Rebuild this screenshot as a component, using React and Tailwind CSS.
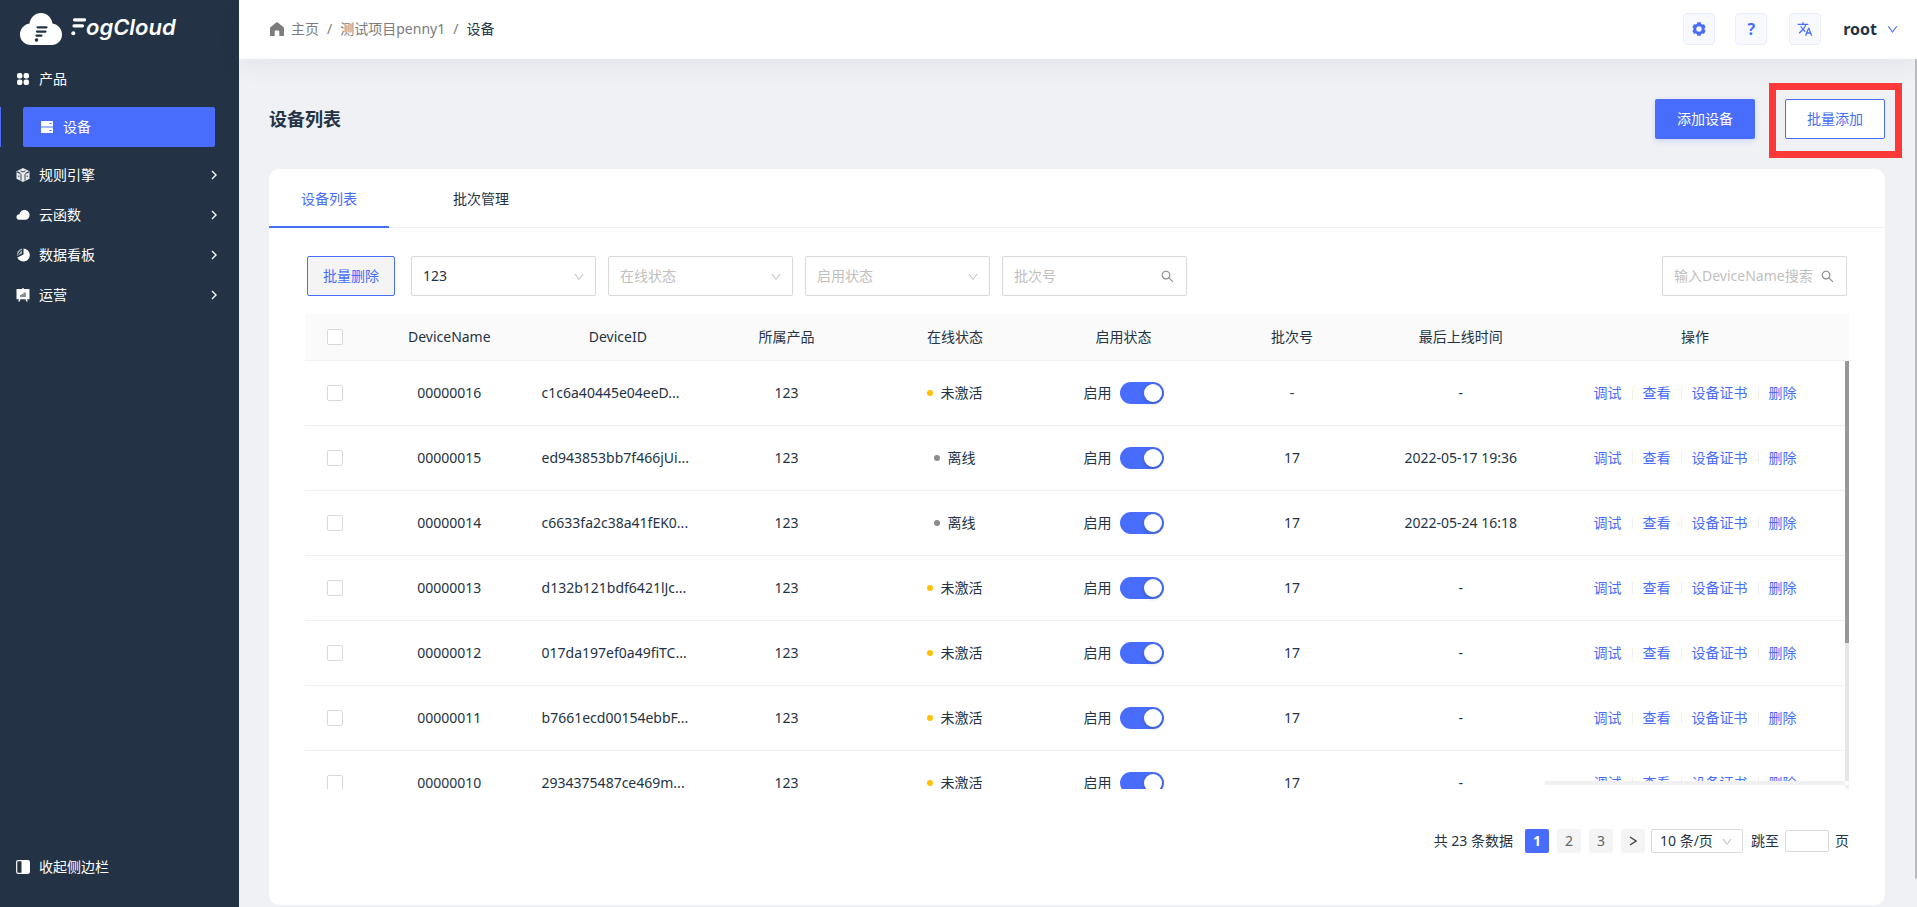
import React, { useState } from 'react';
import { AiOutlineDown, AiOutlineSearch } from 'react-icons/ai';
import { MdTranslate } from 'react-icons/md';

const devices = [
  { name: '00000016', id: 'c1c6a40445e04eeD...', product: '123', online: false, batch: '-', time: '-' },
  { name: '00000015', id: 'ed943853bb7f466jUi...', product: '123', online: true, batch: '17', time: '2022-05-17 19:36' },
  { name: '00000014', id: 'c6633fa2c38a41fEK0...', product: '123', online: true, batch: '17', time: '2022-05-24 16:18' },
  { name: '00000013', id: 'd132b121bdf6421lJc...', product: '123', online: false, batch: '17', time: '-' },
  { name: '00000012', id: '017da197ef0a49fiTC...', product: '123', online: false, batch: '17', time: '-' },
  { name: '00000011', id: 'b7661ecd00154ebbF...', product: '123', online: false, batch: '17', time: '-' },
  { name: '00000010', id: '2934375487ce469m...', product: '123', online: false, batch: '17', time: '-' },
];

const columns = ['DeviceName', 'DeviceID', '所属产品', '在线状态', '启用状态', '批次号', '最后上线时间'];
const actions = ['调试', '查看', '设备证书', '删除'];

const Logo = () => (
  <a href="#home" aria-label="FogCloud" className="flex h-[59px] items-center pl-5 text-white">
    <svg className="mb-0.5" width="42" height="32" viewBox="0 0 42 32">
      <path
        d="M11 32C5 32 0 27.500 0 21.500C0 16 4 11.500 9.500 10.500C10.500 4.500 15 0 21 0C27 0 31.500 4.500 32.500 10.500C38 11.500 42 16 42 21.500C42 27.500 37.500 32 31.500 32Z"
        fill="#fff"
      />
      <path d="M17.500 14.300H26.500M17 18.600H25.500M16.500 22.600H21.500" stroke="#233345" strokeWidth="2.200" strokeLinecap="round" />
      <circle cx="16.500" cy="27" r="1.800" fill="#233345" />
    </svg>
    <svg className="mb-1.5 ml-[9px]" width="15" height="18" viewBox="0 0 15 18">
      <path d="M3.500 1.800H13.500M3 7.800H11.500" stroke="#fff" strokeWidth="3.200" strokeLinecap="round" />
      <circle cx="2.300" cy="15.200" r="2" fill="#fff" />
    </svg>
    <span className="mb-1.5 font-['Inter',sans-serif] text-[22px] leading-8 font-semibold italic">ogCloud</span>
  </a>
);

const GridIcon = () => (
  <svg width="14" height="14" viewBox="0 0 14 14" fill="currentColor">
    <rect x="1" y="1" width="5.400" height="5.400" rx="2" />
    <rect x="7.600" y="1" width="5.400" height="5.400" rx="2" />
    <rect x="1" y="7.600" width="5.400" height="5.400" rx="2" />
    <rect x="7.600" y="7.600" width="5.400" height="5.400" rx="2" />
  </svg>
);

const ServerIcon = () => (
  <svg width="14" height="14" viewBox="0 0 14 14">
    <rect x="1" y="1" width="12" height="5" rx="0.600" fill="#fff" />
    <rect x="1" y="6" width="12" height="2" fill="#fff" opacity="0.500" />
    <rect x="1" y="8" width="12" height="5" rx="0.600" fill="#fff" />
    <path d="M9.500 3.500H11.500M9.500 10.500H11.500" stroke="#486cfb" />
  </svg>
);

const CubeIcon = () => (
  <svg width="14" height="14" viewBox="0 0 14 14">
    <path d="M7 0L13.500 3.300V10.700L7 14L0.500 10.700V3.300Z" fill="#fff" opacity="0.900" />
    <path d="M1 3.800L4.500 5.500M13 3.800L9.500 5.500" fill="none" stroke="#233345" strokeWidth="1.200" />
    <path d="M4.500 2.800L7 4L9.500 2.800M5 6V12.500M9 6V12.500M2.800 7.500V9M11.200 7.500V9" fill="none" stroke="#233345" strokeWidth="0.900" />
  </svg>
);

const CloudIcon = () => (
  <svg width="16" height="14" viewBox="0 0 16 14">
    <path
      d="M4 12.500C1.800 12.500 0.500 11 0.500 9.200C0.500 7.400 2 6 4 6C4.500 3.200 6.600 1.300 9.500 1.300C13 1.300 15.500 3.900 15.500 7C15.500 10.200 13.200 12.500 10.500 12.500Z"
      fill="#fff"
    />
  </svg>
);

const PieIcon = () => (
  <svg width="14" height="14" viewBox="0 0 14 14">
    <path d="M7.500 0.500A6.500 6.500 0 1 1 1.300 9.500L7.500 6.500Z" fill="#fff" />
    <path d="M6 0.500V5.500L1 8A6.300 6.300 0 0 1 6 0.500Z" fill="#fff" opacity="0.600" />
    <path d="M1.500 7L5.500 2" stroke="#233345" />
  </svg>
);

const BoardIcon = () => (
  <svg width="14" height="14" viewBox="0 0 14 14">
    <path d="M7 0V2M4 11L2.800 13.500M10 11L11.200 13.500" stroke="#fff" strokeWidth="1.400" />
    <rect x="0.500" y="1" width="13" height="10.300" rx="0.600" fill="#fff" />
    <path d="M4 9V7H5.500V6H7.500V4.500H10V9Z" fill="#233345" opacity="0.550" />
  </svg>
);

const CollapseIcon = () => (
  <svg width="14" height="14" viewBox="0 0 14 14">
    <rect x="0.700" y="0.700" width="12.600" height="12.600" rx="1.200" fill="none" stroke="#fff" strokeWidth="1.200" />
    <rect x="5.500" y="1" width="8" height="12" fill="#fff" />
  </svg>
);

const HomeIcon = () => (
  <svg width="16" height="14" viewBox="0 0 16 14">
    <path
      d="M7.200 0.500C7.700 0.100 8.300 0.100 8.800 0.500L14.600 5.200C14.900 5.500 15 5.800 15 6.100V13C15 13.600 14.600 14 14 14H10.300V9.500C10.300 8.900 9.900 8.500 9.300 8.500H6.700C6.100 8.500 5.700 8.900 5.700 9.500V14H2C1.400 14 1 13.600 1 13V6.100C1 5.800 1.100 5.500 1.400 5.200Z"
      fill="#7c7c7c"
    />
  </svg>
);

const GearIcon = () => (
  <svg width="14" height="14" viewBox="0 0 14 14">
    <circle cx="7" cy="7" r="4.200" fill="none" stroke="#486cfb" strokeWidth="3" />
    <path
      d="M7 0.300V2.500M7 11.500V13.700M1.200 3.650L3 4.700M11 9.300L12.800 10.350M1.200 10.350L3 9.300M11 4.700L12.800 3.650"
      stroke="#486cfb"
      strokeWidth="3.600"
    />
  </svg>
);

const menus = [
  { label: '规则引擎', Icon: CubeIcon },
  { label: '云函数', Icon: CloudIcon },
  { label: '数据看板', Icon: PieIcon },
  { label: '运营', Icon: BoardIcon },
];

const Sidebar = () => (
  <aside className="flex w-[239px] shrink-0 flex-col bg-[#233345] text-white">
    <Logo />
    <nav className="flex flex-col">
      <a href="#product" className="flex h-10 items-center gap-[9px] pl-4">
        <span className="flex w-[14px] justify-center"><GridIcon /></span>
        产品
      </a>
      <div className="my-2 border-l border-[#486cfb] pr-6 pl-[22px]">
        <a href="#device" className="flex h-10 items-center gap-[9px] rounded-xs bg-[#486cfb] pl-[17px]">
          <ServerIcon />
          设备
        </a>
      </div>
      {menus.map(({ label, Icon }) => (
        <button key={label} type="button" className="flex h-10 items-center gap-[9px] pr-[22px] pl-4">
          <span className="flex w-[14px] shrink-0 justify-center"><Icon /></span>
          {label}
          <svg className="ml-auto" width="6" height="10" viewBox="0 0 6 10">
            <path d="M1 1L5 5L1 9" fill="none" stroke="#fff" strokeWidth="1.400" />
          </svg>
        </button>
      ))}
    </nav>
    <button type="button" className="mt-auto mb-5 flex h-10 items-center gap-[9px] pl-4">
      <CollapseIcon />
      收起侧边栏
    </button>
  </aside>
);

const Header = () => (
  <header className="relative flex h-[59px] shrink-0 items-center bg-white pr-[18px] pb-px pl-[30px] shadow-[0_8px_24px_rgba(40,50,80,0.06)]">
    <nav aria-label="breadcrumb" className="flex items-center text-[#7c7c7c]">
      <a href="#home" className="flex items-center gap-1.5">
        <HomeIcon />
        主页
      </a>
      <span className="mx-2">/</span>
      <a href="#project">测试项目penny1</a>
      <span className="mx-2">/</span>
      <span className="text-[#233345]">设备</span>
    </nav>
    <div className="ml-auto flex items-center gap-[22px]">
      <button type="button" aria-label="设置" className="flex size-8 items-center justify-center rounded-sm border border-[#e9edff] bg-[#f8f9ff]">
        <GearIcon />
      </button>
      <button type="button" aria-label="帮助" className="-ml-0.5 flex size-8 items-center justify-center rounded-sm border border-[#e9edff] bg-[#f8f9ff] text-base font-bold text-[#486cfb]">
        ?
      </button>
      <button type="button" aria-label="语言" className="flex size-8 items-center justify-center rounded-sm border border-[#e9edff] bg-[#f8f9ff] text-[#486cfb]">
        <MdTranslate size={16} />
      </button>
      <button type="button" className="flex items-center gap-[9px] text-base font-bold">
        root
        <AiOutlineDown size={13} className="text-[#486cfb]" />
      </button>
    </div>
  </header>
);

const FilterSelect = ({ label, value }) => (
  <div className="relative w-[185px]">
    <select
      aria-label={label}
      className={`h-10 w-full appearance-none rounded-xs border border-[#d9d9d9] bg-white px-[11px] ${value ? 'text-[#233345]' : 'text-[#bfbfbf]'}`}
    >
      <option>{value || label}</option>
    </select>
    <AiOutlineDown size={12} className="pointer-events-none absolute top-[15px] right-[11px] text-[#bfbfbf]" />
  </div>
);

const SearchInput = ({ placeholder }) => (
  <label className="flex h-10 w-[185px] items-center gap-1 rounded-xs border border-[#d9d9d9] bg-white px-[11px]">
    <input type="text" aria-label={placeholder} placeholder={placeholder} className="w-0 flex-1 outline-none placeholder:text-[#bfbfbf]" />
    <AiOutlineSearch size={15} className="shrink-0 text-[#8c8c8c]" />
  </label>
);

const CheckBox = ({ label }) => (
  <input type="checkbox" aria-label={label} className="mx-auto block size-4 appearance-none rounded-xs border border-[#d9d9d9] bg-white" />
);

const DeviceRow = ({ device }) => {
  const [enabled, setEnabled] = useState(true);

  return (
    <tr className="h-[65px] border-b border-[#f0f0f0]">
      <td><CheckBox label={device.name} /></td>
      <td>{device.name}</td>
      <td className="px-2 text-left whitespace-nowrap">{device.id}</td>
      <td>{device.product}</td>
      <td>
        <span className="flex items-center justify-center gap-[7px]">
          <span className={`size-1.5 rounded-full ${device.online ? 'bg-[#8c8c8c]' : 'bg-[#ffc107]'}`}></span>
          {device.online ? '离线' : '未激活'}
        </span>
      </td>
      <td>
        <label className="flex items-center justify-center gap-2">
          启用
          <span className="relative flex h-[22px] w-11">
            <input
              type="checkbox"
              checked={enabled}
              onChange={() => setEnabled(!enabled)}
              className="peer size-full appearance-none rounded-full bg-[#bfbfbf] checked:bg-[#486cfb]"
            />
            <span className="pointer-events-none absolute top-0.5 left-0.5 size-[18px] rounded-full bg-white shadow-[0_2px_4px_rgba(0,35,11,0.2)] peer-checked:left-6"></span>
          </span>
        </label>
      </td>
      <td>{device.batch}</td>
      <td>{device.time}</td>
      <td>
        <div className="flex items-center justify-center text-[#486cfb]">
          {actions.map((action, i) => (
            <React.Fragment key={action}>
              {i > 0 && <span className="mx-2.5 h-3 w-px bg-[#f0f0f0]"></span>}
              <a href="#action">{action}</a>
            </React.Fragment>
          ))}
        </div>
      </td>
    </tr>
  );
};

const TableColumns = () => (
  <colgroup>
    <col className="w-[60px]" />
    {columns.map((c) => <col key={c} />)}
    <col className="w-[300px]" />
  </colgroup>
);

const DeviceTable = () => (
  <div className="relative mt-[18px] h-[475px] overflow-hidden bg-[linear-gradient(#fafafa_46px,#fff_46px)]">
    <table className="w-[calc(100%-4px)] table-fixed border-collapse text-center">
      <TableColumns />
      <thead>
        <tr className="h-[46px] border-b border-[#f0f0f0]">
          <th><CheckBox label="全选" /></th>
          {columns.map((c) => <th key={c} className="font-normal">{c}</th>)}
          <th className="font-normal">操作</th>
        </tr>
      </thead>
      <tbody>
        {devices.map((device) => <DeviceRow key={device.name} device={device} />)}
      </tbody>
    </table>
    {/* scroll tracks of the table body */}
    <div className="absolute top-[47px] right-0 bottom-2 w-1 bg-[#e6e6e6]">
      <div className="h-[282px] bg-[#97989a]"></div>
    </div>
    <div className="absolute right-1 bottom-0 h-2 w-[300px] border-t-4 border-[#f0f0f0] bg-white"></div>
    <div className="absolute right-0 bottom-0 size-1 bg-[#f0f0f0]"></div>
  </div>
);

const Pagination = () => (
  <div className="mt-10 flex h-6 items-center justify-end">
    <span className="mr-3">共 23 条数据</span>
    <div className="flex gap-2 text-[#666]">
      <button type="button" className="size-6 rounded-xs bg-[#486cfb] font-bold text-white">1</button>
      <button type="button" className="size-6 rounded-xs bg-[#f4f4f4]">2</button>
      <button type="button" className="size-6 rounded-xs bg-[#f4f4f4]">3</button>
      <button type="button" aria-label="下一页" className="flex size-6 items-center justify-center rounded-xs bg-[#f4f4f4]">
        <svg width="8" height="10" viewBox="0 0 8 10">
          <path d="M1 1L7 5L1 9" fill="none" stroke="#444" strokeWidth="1.400" />
        </svg>
      </button>
    </div>
    <div className="relative ml-1.5">
      <select aria-label="每页条数" className="block h-6 w-[92px] appearance-none rounded-xs border border-[#d9d9d9] bg-white pl-2 leading-5">
        <option>10 条/页</option>
      </select>
      <AiOutlineDown size={12} className="pointer-events-none absolute top-[7px] right-[10px] text-[#bfbfbf]" />
    </div>
    <label className="ml-2 flex items-center gap-1.5">
      跳至
      <input type="text" className="h-[22px] w-11 rounded-xs border border-[#d9d9d9] px-2" />
      页
    </label>
  </div>
);

const App = () => {
  const [tab, setTab] = useState('设备列表');

  return (
    <div className="flex min-h-screen bg-[#f0f1f5] font-['Noto_Sans','Noto_Sans_CJK_SC',sans-serif] text-sm text-[#233345]">
      <Sidebar />
      <div className="relative flex min-w-0 flex-1 flex-col">
        <Header />
        <main className="pt-10 pr-8 pb-0.5 pl-[30px]">
          <div className="flex h-10 items-center justify-between">
            <h1 className="text-lg font-bold">设备列表</h1>
            <div className="flex gap-[30px]">
              <button type="button" className="h-10 w-[100px] rounded-xs bg-[#486cfb] text-white shadow-[0_2px_6px_rgba(72,108,251,0.2)]">
                添加设备
              </button>
              <div className="relative">
                <button type="button" className="h-10 w-[100px] rounded-xs border border-[#486cfb] bg-white text-[#486cfb]">
                  批量添加
                </button>
                <div className="pointer-events-none absolute -top-4 -right-[17px] -bottom-[19px] -left-4 border-[7px] border-[#fd3838]"></div>
              </div>
            </div>
          </div>

          <section className="mt-[30px] rounded-[10px] bg-white pb-[52px]">
            <div role="tablist" className="flex h-[59px] gap-8 border-b border-[#f0f0f0]">
              {['设备列表', '批次管理'].map((name) => (
                <button
                  key={name}
                  type="button"
                  role="tab"
                  aria-selected={tab === name}
                  onClick={() => setTab(name)}
                  className={`-mb-px h-[59px] w-[120px] border-b-2 pt-0.5 ${tab === name ? 'border-[#486cfb] text-[#486cfb]' : 'border-transparent'}`}
                >
                  {name}
                </button>
              ))}
            </div>

            <div className="px-9 pt-7">
              <div className="flex gap-3 px-0.5">
                <button type="button" className="mr-1 h-10 w-[88px] rounded-xs border border-[#486cfb] bg-[#f4f4f4] text-[#486cfb]">
                  批量删除
                </button>
                <FilterSelect label="所属产品" value="123" />
                <FilterSelect label="在线状态" />
                <FilterSelect label="启用状态" />
                <SearchInput placeholder="批次号" />
                <div className="ml-auto">
                  <SearchInput placeholder="输入DeviceName搜索" />
                </div>
              </div>
              <DeviceTable />
              <Pagination />
            </div>
          </section>
        </main>
        <div className="absolute top-[59px] right-0 bottom-7 w-0.5 rounded-b-full bg-[#b9babd]"></div>
      </div>
    </div>
  );
};

export default App;
